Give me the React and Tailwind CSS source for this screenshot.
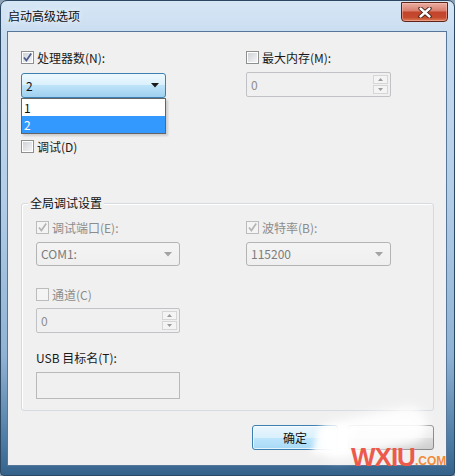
import React from 'react';

function Check({ checked, disabled }) {
  return (
    <span
      className={`relative w-[13px] h-[13px] shrink-0 border flex items-center justify-center ${
        disabled ? 'border-[#bcbcbc] bg-[#f4f4f4]' : 'border-[#8e8f8f] bg-white'
      }`}
    >
      <span
        className={`w-[9px] h-[9px] ${
          disabled ? 'bg-[#f4f4f4]' : 'bg-[linear-gradient(135deg,#cfd3d9,#f4f4f5)]'
        }`}
      />
      {checked && (
        <svg className="absolute left-[-1px] top-[-1px]" width="13" height="13" viewBox="0 0 13 13">
          <path
            d="M3 6.5 L5.4 9.6 L10.2 2.6"
            fill="none"
            stroke={disabled ? '#b4b4b4' : '#4a5d8c'}
            strokeWidth="1.7"
          />
        </svg>
      )}
    </span>
  );
}

function CheckRow({ label, checked, disabled }) {
  return (
    <div className="h-[13px] flex items-center gap-[3px]">
      <Check checked={checked} disabled={disabled} />
      <span className={`leading-[13px] ${disabled ? 'text-[#8c8c8c]' : 'text-[#1a1a1a]'}`}>{label}</span>
    </div>
  );
}

function Arrow({ color }) {
  return (
    <svg width="8" height="5" viewBox="0 0 8 5">
      <path d="M0 0 H8 L4 4.5 Z" fill={color} />
    </svg>
  );
}

function DisabledCombo({ value, width }) {
  return (
    <div
      className={`${width} h-[24px] rounded-[3px] border border-[#b4b4b4] bg-[linear-gradient(#f4f4f4,#efefef)] flex items-center pl-[4px] pr-[7px]`}
    >
      <span className="flex-1 text-[#7c7c7c]">{value}</span>
      <Arrow color="#a3a3a3" />
    </div>
  );
}

function Spin({ width }) {
  return (
    <div className={`${width} h-[25px] rounded-[2px] border border-[#c0c2c6] bg-[#f0f0f0] flex items-center`}>
      <span className="flex-1 pl-[4px] text-[#8d8d8d]">0</span>
      <div className="w-[15px] h-full flex flex-col gap-[1px] py-[2px] mr-[2px]">
        <div className="flex-1 border border-[#d6d6d6] bg-[#f4f4f4] flex items-center justify-center">
          <svg width="5" height="3" viewBox="0 0 5 3">
            <path d="M0 3 L2.5 0 L5 3 Z" fill="#9a9a9a" />
          </svg>
        </div>
        <div className="flex-1 border border-[#d6d6d6] bg-[#f4f4f4] flex items-center justify-center">
          <svg width="5" height="3" viewBox="0 0 5 3">
            <path d="M0 0 L5 0 L2.5 3 Z" fill="#9a9a9a" />
          </svg>
        </div>
      </div>
    </div>
  );
}

export default function App() {
  return (
    <div className="w-[455px] h-[476px] bg-[#8fa2b5] font-['Noto_Sans_CJK_SC',sans-serif] text-[12px] relative overflow-hidden">
      <div className="w-full h-full rounded-t-[7px] rounded-b-[4px] border border-[#2c4863] bg-[linear-gradient(#d6e6f5,#c8dcf0_8%,#b4cee8_40%,#8fb2d4_75%,#45749d_95%,#35628b)] flex flex-col">
        {/* title bar */}
        <div className="h-[30px] flex items-start shrink-0">
          <span className="ml-[7px] mt-[8px] text-[12px] leading-[14px] text-[#111] [text-shadow:0_0_6px_#fff]">
            启动高级选项
          </span>
          <div className="ml-auto mr-[6px] mt-[1px] w-[47px] h-[20px] rounded-b-[4px] border border-[#5e2418] bg-[linear-gradient(#eaaea2,#d9806f_42%,#c2442c_52%,#c44a2e_80%,#de7d58)] flex items-center justify-center shadow-[inset_0_0_0_1px_rgba(255,200,190,0.45)]">
            <svg width="14" height="11" viewBox="0 0 14 11">
              <path d="M2.5 1.5 L11.5 9.5 M11.5 1.5 L2.5 9.5" stroke="#3d1610" strokeWidth="4.2" strokeLinecap="round" />
              <path d="M2.5 1.5 L11.5 9.5 M11.5 1.5 L2.5 9.5" stroke="#fff" strokeWidth="2.4" strokeLinecap="round" />
            </svg>
          </div>
        </div>

        {/* client area */}
        <div className="flex-1 ml-[6px] mr-[7px] mb-[9px] border border-[#56779a] bg-[#f0f0f0] pt-[19px] pl-[13px] pr-[12px] flex flex-col">
          <div className="grid grid-cols-[225px_1fr]">
            <div className="flex flex-col">
              <CheckRow label="处理器数(N):" checked />
              <div className="relative mt-[9px] w-[145px] h-[25px] rounded-[3px] border border-[#3c7fb1] bg-[linear-gradient(#eef8fe,#d9f0fc_50%,#bde3f9_50%,#9fd0ef)] flex items-center pl-[4px] pr-[6px]">
                <span className="flex-1 text-[#111]">2</span>
                <Arrow color="#1a1a1a" />
                <div className="absolute left-[-1px] top-[24px] w-[145px] border border-[#646464] bg-white z-10 shadow-[2px_2px_2px_rgba(0,0,0,0.15)]">
                  <div className="h-[17px] pl-[2px] flex items-center text-[#111]">1</div>
                  <div className="h-[17px] pl-[2px] flex items-center bg-[#3399ff] text-white">2</div>
                </div>
              </div>
              <div className="mt-[42px]">
                <CheckRow label="调试(D)" />
              </div>
            </div>
            <div className="flex flex-col">
              <CheckRow label="最大内存(M):" />
              <div className="mt-[8px]">
                <Spin width="w-[145px]" />
              </div>
            </div>
          </div>

          {/* group box */}
          <div className="relative mt-[50px] h-[208px] rounded-[3px] border border-[#d5dbe0] shadow-[inset_1px_1px_0_#fff] pt-[17px] pl-[14px]">
            <span className="absolute left-[6px] top-[-8px] px-[2px] bg-[#f0f0f0] leading-[14px] text-[#111]">
              全局调试设置
            </span>
            <div className="grid grid-cols-[210px_1fr]">
              <div className="flex flex-col">
                <CheckRow label="调试端口(E):" checked disabled />
                <div className="mt-[8px]">
                  <DisabledCombo value="COM1:" width="w-[144px]" />
                </div>
                <div className="mt-[22px]">
                  <CheckRow label="通道(C)" disabled />
                </div>
                <div className="mt-[7px]">
                  <Spin width="w-[144px]" />
                </div>
                <div className="mt-[18px] leading-[14px] text-[#1a1a1a]">USB 目标名(T):</div>
                <div className="mt-[7px] w-[144px] h-[27px] border border-[#b9b9b9] bg-[#f0f0f0]" />
              </div>
              <div className="flex flex-col">
                <CheckRow label="波特率(B):" checked disabled />
                <div className="mt-[8px]">
                  <DisabledCombo value="115200" width="w-[145px]" />
                </div>
              </div>
            </div>
          </div>

          {/* buttons */}
          <div className="mt-[14px] flex justify-end gap-[10px]">
            <div className="w-[86px] h-[25px] rounded-[3px] border border-[#3c7fb1] bg-[linear-gradient(#eaf6fd,#d9f0fc_50%,#bee6fd_50%,#a7d9f5)] shadow-[inset_0_0_0_1px_rgba(255,255,255,0.7)] flex items-center justify-center text-[#111]">
              确定
            </div>
            <div className="w-[86px] h-[25px] rounded-[3px] border border-[#8a8a8a] bg-[linear-gradient(#f2f2f2,#ebebeb_50%,#dddddd_50%,#cfcfcf)]" />
          </div>
        </div>
      </div>

      {/* watermark */}
      <div className="absolute left-[318px] top-[414px] w-[110px] h-[38px] bg-white/90 blur-[5px] rotate-[-12deg] rounded-full" />
      <div className="absolute left-[316px] top-[426px] w-[36px] h-[28px] bg-white/90 blur-[3px] skew-x-[-20deg]" />
      <div className="absolute left-[351px] top-[444px] flex items-end font-['Liberation_Sans',sans-serif] font-bold">
        <span className="text-[26px] leading-[26px] tracking-[-1px] text-[#ec5a4c]">WXIU</span>
        <span className="text-[12px] leading-[12px] mb-[3px] text-[#f08c3c]">.COM</span>
      </div>
    </div>
  );
}
